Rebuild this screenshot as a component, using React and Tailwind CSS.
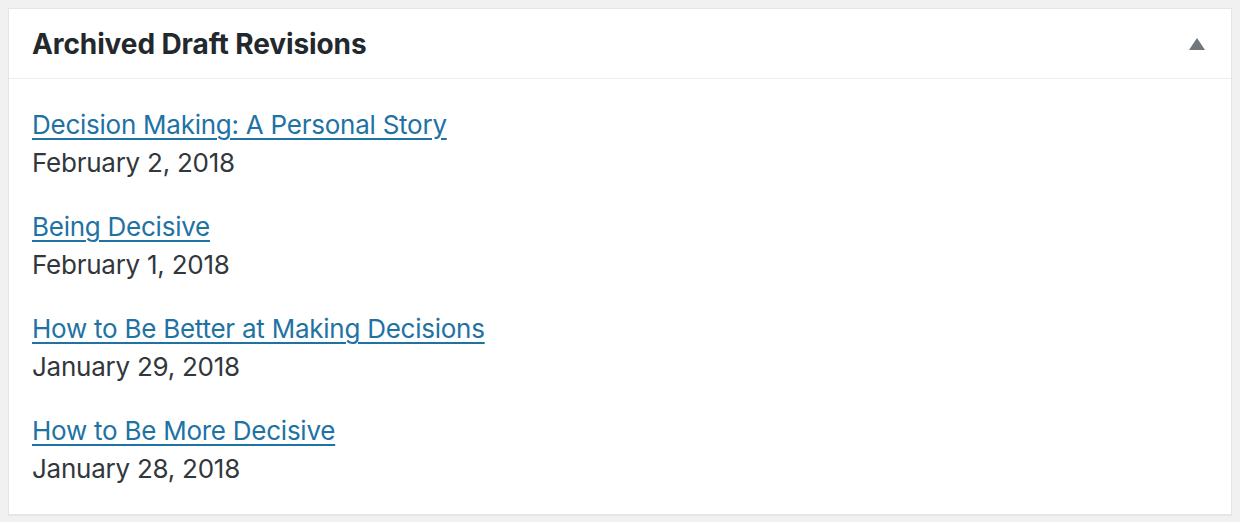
const DRAFTS = [
  { title: "Decision Making: A Personal Story", date: "February 2, 2018" },
  { title: "Being Decisive", date: "February 1, 2018" },
  { title: "How to Be Better at Making Decisions", date: "January 29, 2018" },
  { title: "How to Be More Decisive", date: "January 28, 2018" },
];

export default function App() {
  return (
    <div className="min-h-screen bg-[#f1f1f1] p-[8px] font-['Inter','Liberation_Sans',sans-serif]">
      <div className="bg-white border border-[#e5e5e5] shadow-[0_1px_1px_rgba(0,0,0,0.04)]">
        {/* header */}
        <div className="h-[70px] flex items-center justify-between border-b border-[#eeeeee] pl-[23px] pr-[26px]">
          <h2 className="text-[28px] font-bold text-[#23282d] leading-none tracking-[-0.1px]">Archived Draft Revisions</h2>
          <button className="w-[16px] h-[12px]">
            <svg width="16" height="12" viewBox="0 0 16 12">
              <polygon points="8,0 16,12 0,12" fill="#72777c" />
            </svg>
          </button>
        </div>

        {/* list */}
        <ul className="px-[23px] pt-[27px] pb-[26px] flex flex-col gap-[26px]">
          {DRAFTS.map((d) => (
            <li key={d.title} className="text-[26px] leading-[38px] tracking-[-0.25px]">
              <a href="#" className="text-[#1e72a4] underline underline-offset-[4px] decoration-[2px]">
                {d.title}
              </a>
              <div className="text-[#32373c]">{d.date}</div>
            </li>
          ))}
        </ul>
      </div>
    </div>
  );
}
